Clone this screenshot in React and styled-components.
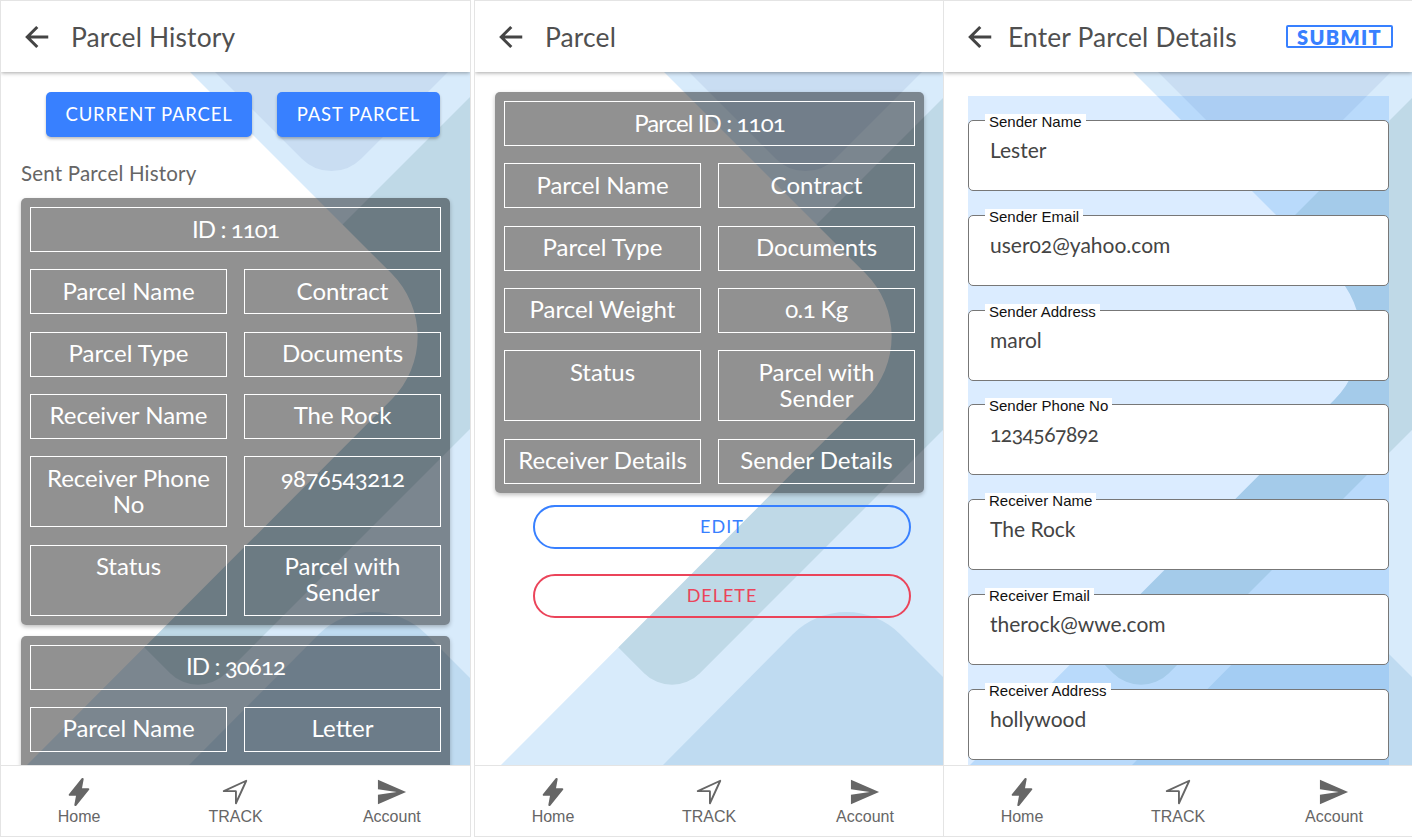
import React from 'react'
import styled, { createGlobalStyle } from 'styled-components'
import { IoArrowBackSharp, IoFlash, IoNavigateOutline, IoSendSharp } from 'react-icons/io5'

const Global = createGlobalStyle`
  html, body { margin: 0; padding: 0; background: #fff; }
  body { font-family: Lato, "Open Sans", sans-serif; overflow: hidden; }
  * { box-sizing: border-box; }
`

const Board = styled.div`
  display: flex;
  width: 1412px;
  height: 839px;
  overflow: hidden;
`
const Phone = styled.section`
  display: flex;
  flex-direction: column;
  flex: none;
  width: ${p => p.$w}px;
  height: 837px;
  margin-right: ${p => p.$after || 0}px;
  border: 1px solid #e4e4e4;
  border-left-width: ${p => p.$noLeft ? 0 : 1}px;
  border-right-width: ${p => p.$noRight ? 0 : 1}px;
  overflow: hidden;
  background: #fff;
`
const Header = styled.header`
  position: relative;
  z-index: 2;
  flex: none;
  display: flex;
  align-items: center;
  height: 71px;
  padding-left: ${p => p.$pad}px;
  padding-right: 19px;
  background: #fff;
  box-shadow: 0 1px 4px rgba(0, 0, 0, .35);
  color: #444;
  svg { font-size: 32px; flex: none; }
`
const Title = styled.h1`
  flex: 1;
  margin: 0 0 0 ${p => p.$gap}px;
  font-size: 26.4px;
  font-weight: 400;
  letter-spacing: .15px;
  color: #505050;
`
const SubmitButton = styled.button`
  width: 107px;
  height: 23px;
  padding: 0;
  border: 2px solid #3880ff;
  border-radius: 2px;
  background: #fff;
  color: #3880ff;
  font: 800 20px/18px Lato, sans-serif;
  letter-spacing: 1.3px;
`
const Content = styled.main`
  position: relative;
  flex: 1;
  min-height: 0;
  overflow: hidden;
`
const Backdrop = styled.svg`
  position: absolute;
  left: 0;
  top: 0;
  width: 470px;
  height: 693px;
`
const Flow = styled.div`
  position: relative;
  padding: ${p => p.$top}px ${p => p.$side}px 0;
`
const ButtonRow = styled.div`
  display: flex;
  gap: 25px;
  margin-left: 25px;
`
const FillButton = styled.button`
  width: ${p => p.$w}px;
  height: 45px;
  padding: 0 0 2px;
  border: 0;
  border-radius: 5px;
  background: #3880ff;
  color: #fff;
  font: 400 18.5px Lato, sans-serif;
  letter-spacing: .8px;
  box-shadow: 0 2px 3px rgba(0, 0, 0, .25);
`
const SectionTitle = styled.h2`
  margin: 24px 0 13px;
  font-size: 20.5px;
  line-height: 24px;
  font-weight: 400;
  letter-spacing: .2px;
  color: #666;
`
const Card = styled.article`
  display: grid;
  grid-template-columns: 197px 197px;
  gap: 17.33px 17px;
  width: 429px;
  margin-bottom: 11px;
  padding: 9px 9px ${p => p.$tail || 9}px;
  border-radius: 5px;
  background: rgba(0, 0, 0, .43);
  box-shadow: 0 2px 4px rgba(0, 0, 0, .25);
`
const Cell = styled.div`
  grid-column: ${p => p.$wide ? '1 / 3' : 'auto'};
  padding: 7.5px 6px 9.5px;
  border: 1px solid #fff;
  color: #fff;
  font-size: 24px;
  line-height: 26px;
  text-align: center;
  font-variant-numeric: oldstyle-nums;
  letter-spacing: ${p => p.$wide ? '-.9px' : p.$tight ? '-.6px' : '0'};
`
const PillStack = styled.div`
  display: flex;
  flex-direction: column;
  gap: 25px;
  margin: 12px 0 0 38px;
`
const PillButton = styled.button`
  width: 378px;
  height: 44px;
  padding: 0 0 2px;
  border: 2px solid ${p => p.$color};
  border-radius: 22px;
  background: transparent;
  color: ${p => p.$color};
  font: 400 18px Lato, sans-serif;
  letter-spacing: 1px;
`
const FormPanel = styled.div`
  height: 720px;
  margin-right: -1px;
  padding: 24px 0 0;
  background: rgba(0, 120, 255, .14);
`
const Field = styled.div`
  position: relative;
  height: 71px;
  margin-bottom: 23.8px;
  padding: 16px 21px 0;
  border: 1px solid #777;
  border-radius: 5px;
  background: #fff;
  color: #444;
  font-size: 21px;
  line-height: 26px;
  font-variant-numeric: oldstyle-nums;
`
const FieldValue = styled.span`
  letter-spacing: ${p => p.$tight ? '-.5px' : '0'};
`
const FieldLabel = styled.label`
  position: absolute;
  left: 16px;
  top: -7px;
  padding: 0 4px;
  background: #fff;
  color: #111;
  font: 400 15px/16px "Liberation Sans", Arial, sans-serif;
`
const Nav = styled.nav`
  position: relative;
  z-index: 2;
  flex: none;
  display: grid;
  grid-template-columns: repeat(3, 1fr);
  height: 71px;
  border-top: 1px solid #e4e4e4;
  background: #fff;
`
const NavItem = styled.a`
  display: flex;
  flex-direction: column;
  align-items: center;
  padding-top: 11px;
  color: #666;
  font: 400 16px/16px "Liberation Sans", Arial, sans-serif;
  svg { font-size: 30px; display: block; margin-bottom: 2px; }
`

const Shapes = () => (
  <Backdrop viewBox="0 73 470 693" aria-hidden="true">
    <rect x="0" y="73" width="470" height="693" fill="#d8ebfb" />
    <path d="M214 73 L300.8 159.8 A42 42 0 0 0 360.2 159.8 L447 73 Z" fill="#c9ddf2" />
    <path d="M31 536 L494 73 L826 73 L224.6 674.4 A39 39 0 0 1 169.4 674.4 Z" fill="#bfd9e7" />
    <path d="M0 73 L189 73 L390.6 274.6 A89 89 0 0 1 390.6 400.4 L26 766 L0 766 Z" fill="#fff" />
    <path d="M188 766 L317.8 635.2 A76 76 0 0 1 425.2 635.2 L556 766 Z" fill="#bfdbf1" />
  </Backdrop>
)

const PageHeader = ({ title, gap, pad = 20, children }) => (
  <Header $pad={pad}>
    <IoArrowBackSharp />
    <Title $gap={gap}>{title}</Title>
    {children}
  </Header>
)

const BottomNav = () => (
  <Nav>
    <NavItem><IoFlash />Home</NavItem>
    <NavItem><IoNavigateOutline />TRACK</NavItem>
    <NavItem><IoSendSharp />Account</NavItem>
  </Nav>
)

const ParcelCard = ({ head, rows, tail }) => (
  <Card $tail={tail}>
    <Cell $wide>{head}</Cell>
    {rows.flat().map((text, i) => <Cell key={i} $tight={/\d/.test(text)}>{text}</Cell>)}
  </Card>
)

const firstParcel = [
  ['Parcel Name', 'Contract'],
  ['Parcel Type', 'Documents'],
  ['Receiver Name', 'The Rock'],
  ['Receiver Phone No', '9876543212'],
  ['Status', 'Parcel with Sender'],
]
const detailParcel = [
  ['Parcel Name', 'Contract'],
  ['Parcel Type', 'Documents'],
  ['Parcel Weight', '0.1 Kg'],
  ['Status', 'Parcel with Sender'],
  ['Receiver Details', 'Sender Details'],
]
const fields = [
  ['Sender Name', 'Lester'],
  ['Sender Email', 'user02@yahoo.com'],
  ['Sender Address', 'marol'],
  ['Sender Phone No', '1234567892'],
  ['Receiver Name', 'The Rock'],
  ['Receiver Email', 'therock@wwe.com'],
  ['Receiver Address', 'hollywood'],
]

export default function App() {
  return (
    <Board>
      <Global />
      <Phone $w={471} $after={3}>
        <PageHeader title="Parcel History" gap={18} />
        <Content>
          <Shapes />
          <Flow $top={20} $side={20}>
            <ButtonRow>
              <FillButton $w={206}>CURRENT PARCEL</FillButton>
              <FillButton $w={163}>PAST PARCEL</FillButton>
            </ButtonRow>
            <SectionTitle>Sent Parcel History</SectionTitle>
            <ParcelCard head="ID : 1101" rows={firstParcel} />
            <ParcelCard head="ID : 30612" rows={[['Parcel Name', 'Letter']]} tail={40} />
          </Flow>
        </Content>
        <BottomNav />
      </Phone>
      <Phone $w={470}>
        <PageHeader title="Parcel" gap={18} />
        <Content>
          <Shapes />
          <Flow $top={20} $side={20}>
            <ParcelCard head="Parcel ID : 1101" rows={detailParcel} />
            <PillStack>
              <PillButton $color="#3880ff">EDIT</PillButton>
              <PillButton $color="#eb445a">DELETE</PillButton>
            </PillStack>
          </Flow>
        </Content>
        <BottomNav />
      </Phone>
      <Phone $w={468} $noLeft $noRight>
        <PageHeader title="Enter Parcel Details" gap={12} pad={20}>
          <SubmitButton>SUBMIT</SubmitButton>
        </PageHeader>
        <Content>
          <Shapes />
          <Flow $top={24} $side={24}>
            <FormPanel>
              {fields.map(([label, value]) => (
                <Field key={label}>
                  <FieldLabel>{label}</FieldLabel>
                  <FieldValue $tight={/^\d+$/.test(value)}>{value}</FieldValue>
                </Field>
              ))}
            </FormPanel>
          </Flow>
        </Content>
        <BottomNav />
      </Phone>
    </Board>
  )
}
